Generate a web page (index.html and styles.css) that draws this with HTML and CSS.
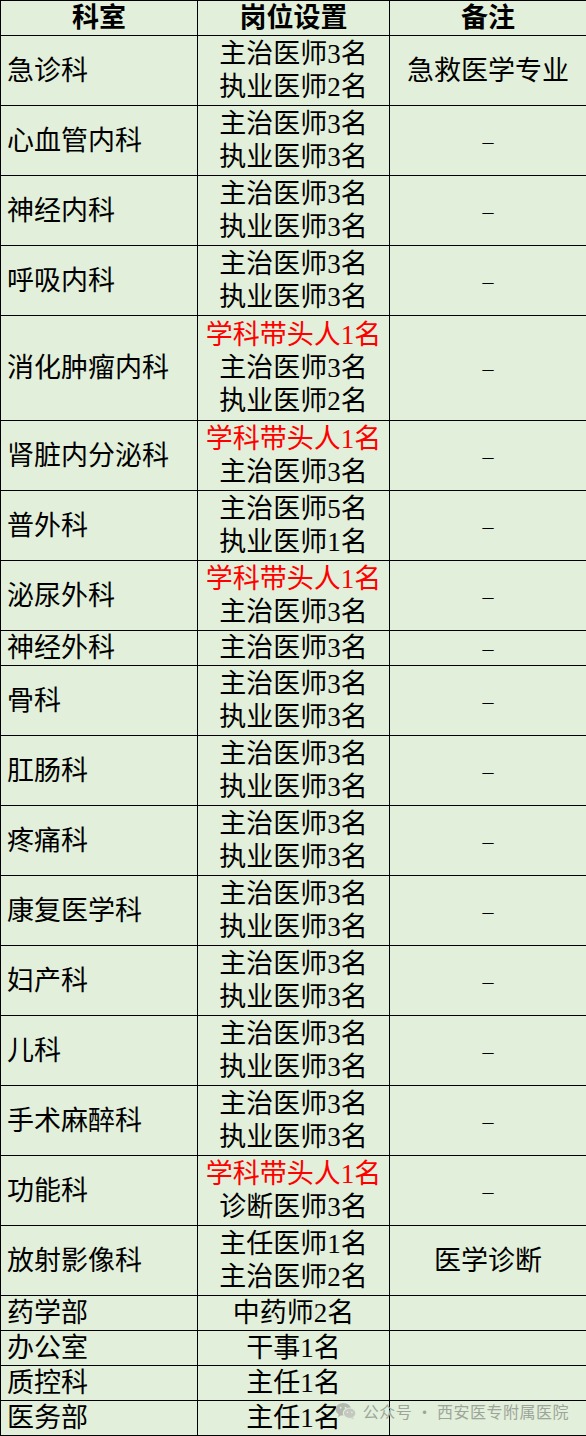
FILE: index.html
```html
<!DOCTYPE html>
<html lang="zh">
<head>
<meta charset="utf-8">
<link rel="stylesheet" href="styles.css">
</head>
<body>
<div class="page">
<table class="posts">
  <colgroup><col class="c1"><col class="c2"><col class="c3"></colgroup>
  <thead>
    <tr class="r1"><th>科室</th><th>岗位设置</th><th>备注</th></tr>
  </thead>
  <tbody>
    <tr class="r2"><td class="dept">急诊科</td><td class="pos">主治医师3名<br>执业医师2名</td><td class="note">急救医学专业</td></tr>
    <tr class="r2"><td class="dept">心血管内科</td><td class="pos">主治医师3名<br>执业医师3名</td><td class="note dash">–</td></tr>
    <tr class="r2"><td class="dept">神经内科</td><td class="pos">主治医师3名<br>执业医师3名</td><td class="note dash">–</td></tr>
    <tr class="r2"><td class="dept">呼吸内科</td><td class="pos">主治医师3名<br>执业医师3名</td><td class="note dash">–</td></tr>
    <tr class="r3"><td class="dept">消化肿瘤内科</td><td class="pos"><span class="lead">学科带头人1名</span><br>主治医师3名<br>执业医师2名</td><td class="note dash">–</td></tr>
    <tr class="r2"><td class="dept">肾脏内分泌科</td><td class="pos"><span class="lead">学科带头人1名</span><br>主治医师3名</td><td class="note dash">–</td></tr>
    <tr class="r2"><td class="dept">普外科</td><td class="pos">主治医师5名<br>执业医师1名</td><td class="note dash">–</td></tr>
    <tr class="r2"><td class="dept">泌尿外科</td><td class="pos"><span class="lead">学科带头人1名</span><br>主治医师3名</td><td class="note dash">–</td></tr>
    <tr class="r1"><td class="dept">神经外科</td><td class="pos">主治医师3名</td><td class="note dash">–</td></tr>
    <tr class="r2"><td class="dept">骨科</td><td class="pos">主治医师3名<br>执业医师3名</td><td class="note dash">–</td></tr>
    <tr class="r2"><td class="dept">肛肠科</td><td class="pos">主治医师3名<br>执业医师3名</td><td class="note dash">–</td></tr>
    <tr class="r2"><td class="dept">疼痛科</td><td class="pos">主治医师3名<br>执业医师3名</td><td class="note dash">–</td></tr>
    <tr class="r2"><td class="dept">康复医学科</td><td class="pos">主治医师3名<br>执业医师3名</td><td class="note dash">–</td></tr>
    <tr class="r2"><td class="dept">妇产科</td><td class="pos">主治医师3名<br>执业医师3名</td><td class="note dash">–</td></tr>
    <tr class="r2"><td class="dept">儿科</td><td class="pos">主治医师3名<br>执业医师3名</td><td class="note dash">–</td></tr>
    <tr class="r2"><td class="dept">手术麻醉科</td><td class="pos">主治医师3名<br>执业医师3名</td><td class="note dash">–</td></tr>
    <tr class="r2"><td class="dept">功能科</td><td class="pos"><span class="lead">学科带头人1名</span><br>诊断医师3名</td><td class="note dash">–</td></tr>
    <tr class="r2"><td class="dept">放射影像科</td><td class="pos">主任医师1名<br>主治医师2名</td><td class="note">医学诊断</td></tr>
    <tr class="r1"><td class="dept">药学部</td><td class="pos">中药师2名</td><td class="note"></td></tr>
    <tr class="r1"><td class="dept">办公室</td><td class="pos">干事1名</td><td class="note"></td></tr>
    <tr class="r1"><td class="dept">质控科</td><td class="pos">主任1名</td><td class="note"></td></tr>
    <tr class="r1"><td class="dept">医务部</td><td class="pos">主任1名</td><td class="note"></td></tr>
  </tbody>
</table>
<div class="watermark">
  <svg class="wx" viewBox="0 0 24 20" width="22" height="18" aria-hidden="true">
    <ellipse cx="9" cy="8" rx="8.5" ry="7" fill="#b3b8b0"/>
    <path d="M4 13 L3 17 L8 14 Z" fill="#b3b8b0"/>
    <ellipse cx="16" cy="12.5" rx="7" ry="5.8" fill="#c4c8c0" stroke="#e2efda" stroke-width="1.2"/>
    <path d="M19 17 L21 19.5 L17 17.6 Z" fill="#c4c8c0"/>
    <circle cx="6" cy="6.5" r="1.1" fill="#e2efda"/>
    <circle cx="11.5" cy="6.5" r="1.1" fill="#e2efda"/>
    <circle cx="13.5" cy="11.5" r="0.9" fill="#e2efda"/>
    <circle cx="18.5" cy="11.5" r="0.9" fill="#e2efda"/>
  </svg>
  <span>公众号 · 西安医专附属医院</span>
</div>
</div>
</body>
</html>
```

FILE: styles.css
```css
html, body {
  margin: 0;
  padding: 0;
  background: #e2efda;
}
.page {
  position: relative;
  width: 586px;
}
.posts {
  width: 586px;
  border-collapse: collapse;
  table-layout: fixed;
  background: #e2efda;
  font-family: "Liberation Serif", "Noto Sans CJK SC", serif;
  font-size: 27px;
  color: #000;
}
.c1 { width: 197px; }
.c2 { width: 192px; }
.c3 { width: 197px; }
.posts th, .posts td {
  border: 1px solid #000;
  padding: 1px 0 0 0;
  line-height: 33px;
  vertical-align: middle;
}
.posts th {
  font-weight: bold;
  text-align: center;
}
.r1 { height: 35px; }
.r2 { height: 70px; }
.r3 { height: 105px; }
.dept {
  text-align: left;
  padding-left: 6px !important;
  white-space: nowrap;
}
.pos, .note {
  text-align: center;
  white-space: nowrap;
}
.dash {
  font-size: 22px;
}
.lead {
  color: #ff0000;
}
.watermark {
  position: absolute;
  right: 17px;
  bottom: 13px;
  display: flex;
  align-items: center;
  gap: 6px;
  font-family: "Noto Sans CJK SC", sans-serif;
  font-size: 16px;
  color: #9da59a;
  letter-spacing: 0.5px;
}
.wx { display: block; }
```
